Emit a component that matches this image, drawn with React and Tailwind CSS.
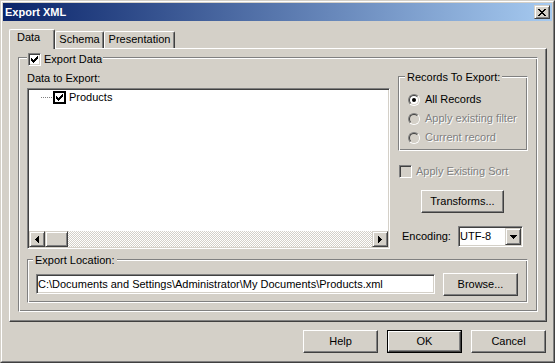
const FONT = "font-['Liberation_Sans',Arial,sans-serif] text-[11px] leading-[13px] text-black";

const raisedBtn =
  "border border-t-white border-l-white border-r-[#404040] border-b-[#404040] shadow-[inset_-1px_-1px_#808080] bg-[#d4d0c8]";
const raisedBox =
  "border border-t-[#d4d0c8] border-l-[#d4d0c8] border-r-[#404040] border-b-[#404040] shadow-[inset_1px_1px_#fff,inset_-1px_-1px_#808080] bg-[#d4d0c8]";
const sunken =
  "border border-t-[#808080] border-l-[#808080] border-r-white border-b-white shadow-[inset_1px_1px_#404040,inset_-1px_-1px_#d4d0c8] p-px";
const etched =
  "border border-t-[#808080] border-l-[#808080] border-r-white border-b-white shadow-[inset_1px_1px_#fff,inset_-1px_-1px_#808080]";
const disabledText = "text-[#808080] [text-shadow:1px_1px_0_#fff]";

const CHECK = "M6 0h1v1h-1zM5 1h2v1h-2zM0 2h1v1h-1zM4 2h3v1h-3zM0 3h2v1h-2zM3 3h3v1h-3zM0 4h5v1h-5zM1 5h3v1h-3zM2 6h1v1h-1z";

function Glyph({ d, w, h }) {
  return (
    <svg width={w} height={h} viewBox={`0 0 ${w} ${h}`} shapeRendering="crispEdges" className="block">
      <path d={d} fill="#000" />
    </svg>
  );
}

function Check({ checked = true, disabled }) {
  return (
    <span className={`${sunken} flex h-[13px] w-[13px] shrink-0 items-center justify-center ${disabled ? "bg-[#d4d0c8]" : "bg-white"}`}>
      {checked && <Glyph d={CHECK} w={7} h={7} />}
    </span>
  );
}

function Radio({ on, disabled }) {
  return (
    <span className="block h-[12px] w-[12px] shrink-0 rounded-full border border-t-[#808080] border-l-[#808080] border-r-white border-b-white">
      <span
        className={`flex h-full w-full items-center justify-center rounded-full border border-t-[#404040] border-l-[#404040] border-r-[#d4d0c8] border-b-[#d4d0c8] ${disabled ? "bg-[#d4d0c8]" : "bg-white"}`}
      >
        {on && <span className="block h-[4px] w-[4px] rounded-full bg-black" />}
      </span>
    </span>
  );
}

function Button({ children, w = "w-[75px]", isDefault }) {
  if (isDefault) {
    return (
      <div className={`${w} h-[23px] border border-black`}>
        <div className={`${raisedBtn} flex h-full w-full items-center justify-center`}>{children}</div>
      </div>
    );
  }
  return <div className={`${raisedBtn} ${w} flex h-[23px] items-center justify-center`}>{children}</div>;
}

function Tab({ label, selected, w }) {
  return (
    <div
      className={`${w} flex justify-center rounded-t-[2px] border-t border-l border-r border-t-white border-l-white border-r-[#404040] shadow-[inset_-1px_0_#808080] pt-px ${
        selected ? "relative z-10 -mb-px h-[20px] justify-start bg-[#d4d0c8] pl-[7px]" : "h-[17px]"
      }`}
    >
      {label}
    </div>
  );
}

export default function App() {
  return (
    <div className={`${FONT} h-[363px] w-[555px] border border-t-[#d4d0c8] border-l-[#d4d0c8] border-r-[#404040] border-b-[#404040] bg-[#d4d0c8]`}>
      <div className="flex h-full flex-col border border-t-white border-l-white border-r-[#808080] border-b-[#808080] p-px">
        {/* title bar */}
        <div className="flex h-[18px] items-center justify-between bg-[linear-gradient(to_right,#0a246a,#a6caf0)] pl-[2px] pr-[2px]">
          <span className="font-bold text-white">Export XML</span>
          <div className={`${raisedBox} flex h-[14px] w-[16px] items-center justify-center`}>
            <Glyph
              w={8}
              h={7}
              d="M0 0h2v1h-2zM6 0h2v1h-2zM1 1h2v1h-2zM5 1h2v1h-2zM2 2h4v1h-4zM3 3h2v1h-2zM2 4h4v1h-4zM1 5h2v1h-2zM5 5h2v1h-2zM0 6h2v1h-2zM6 6h2v1h-2z"
            />
          </div>
        </div>

        <div className="pl-[6px] pt-[8px]">
          {/* tabs */}
          <div className="flex h-[19px] items-end">
            <Tab label="Data" selected w="w-[46px]" />
            <Tab label="Schema" w="w-[49px]" />
            <Tab label="Presentation" w="w-[71px]" />
          </div>

          {/* tab panel */}
          <div className="h-[274px] w-[538px] border border-t-white border-l-white border-r-[#404040] border-b-[#404040] shadow-[inset_-1px_-1px_#808080]">
            <div className={`${etched} relative ml-[8px] mt-[8px] h-[255px] w-[520px] pl-[8px] pt-[14px]`}>
              <div className="absolute left-[8px] top-[-6px] flex h-[14px] items-center gap-[3px] bg-[#d4d0c8] px-px">
                <Check />
                <span>Export Data</span>
              </div>

              <div className="flex items-start">
                {/* left column */}
                <div className="w-[363px]">
                  <div>Data to Export:</div>
                  <div className={`${sunken} mt-[3px] flex h-[161px] flex-col bg-white`}>
                    <div className="flex-1">
                      <div className="mt-px flex h-[13px] items-center pl-[12px]">
                        <svg width="11" height="1" className="block" shapeRendering="crispEdges">
                          <line x1="0" y1="0.5" x2="11" y2="0.5" stroke="#808080" strokeDasharray="1 1" />
                        </svg>
                        <span className="ml-px flex h-[13px] w-[13px] items-center justify-center border-2 border-black bg-white">
                          <Glyph d={CHECK} w={7} h={7} />
                        </span>
                        <span className="ml-[3px]">Products</span>
                      </div>
                    </div>
                    <div className="flex h-[16px]">
                      <div className={`${raisedBox} flex h-[16px] w-[16px] items-center justify-center`}>
                        <Glyph w={4} h={7} d="M3 0h1v7h-1zM2 1h1v5h-1zM1 2h1v3h-1zM0 3h1v1h-1z" />
                      </div>
                      <div className={`${raisedBox} h-[16px] w-[23px]`} />
                      <div className="h-[16px] flex-1 bg-[conic-gradient(#fff_25%,#d4d0c8_0_50%,#fff_0_75%,#d4d0c8_0)] bg-[length:2px_2px]" />
                      <div className={`${raisedBox} flex h-[16px] w-[16px] items-center justify-center`}>
                        <Glyph w={4} h={7} d="M0 0h1v7h-1zM1 1h1v5h-1zM2 2h1v3h-1zM3 3h1v1h-1z" />
                      </div>
                    </div>
                  </div>
                </div>

                {/* right column */}
                <div className="ml-[8px] mt-[4px] w-[130px]">
                  <div className={`${etched} relative h-[75px] w-[130px] pl-[9px] pt-[16px]`}>
                    <div className="absolute left-[6px] top-[-6px] bg-[#d4d0c8] px-[2px]">Records To Export:</div>
                    <div className="flex flex-col gap-[6px]">
                      <div className="flex h-[13px] items-center gap-[5px]">
                        <Radio on />
                        <span>All Records</span>
                      </div>
                      <div className="flex h-[13px] items-center gap-[5px]">
                        <Radio disabled />
                        <span className={disabledText}>Apply existing filter</span>
                      </div>
                      <div className="flex h-[13px] items-center gap-[5px]">
                        <Radio disabled />
                        <span className={disabledText}>Current record</span>
                      </div>
                    </div>
                  </div>

                  <div className="ml-px mt-[14px] flex h-[13px] items-center gap-[4px]">
                    <Check checked={false} disabled />
                    <span className={disabledText}>Apply Existing Sort</span>
                  </div>

                  <div className="ml-[23px] mt-[12px]">
                    <Button w="w-[83px]">Transforms...</Button>
                  </div>

                  <div className="mt-[13px] flex items-center">
                    <span className="ml-[4px] w-[56px]">Encoding:</span>
                    <div className={`${sunken} flex h-[21px] w-[65px] items-center bg-white`}>
                      <span className="flex-1">UTF-8</span>
                      <div className={`${raisedBox} flex h-[17px] w-[16px] items-center justify-center`}>
                        <Glyph w={7} h={4} d="M0 0h7v1h-7zM1 1h5v1h-5zM2 2h3v1h-3zM3 3h1v1h-1z" />
                      </div>
                    </div>
                  </div>
                </div>
              </div>

              {/* export location */}
              <div className={`${etched} relative mt-[10px] h-[44px] w-[501px] pl-[8px] pt-[13px]`}>
                <div className="absolute left-[5px] top-[-6px] bg-[#d4d0c8] px-[2px]">Export Location:</div>
                <div className="flex items-start">
                  <div className={`${sunken} mt-px flex h-[20px] w-[399px] items-center bg-white pl-px`}>
                    C:\Documents and Settings\Administrator\My Documents\Products.xml
                  </div>
                  <div className="ml-[8px]">
                    <Button>Browse...</Button>
                  </div>
                </div>
              </div>
            </div>
          </div>

          {/* dialog buttons */}
          <div className="mt-[8px] flex justify-end gap-[9px] pr-[6px]">
            <Button>Help</Button>
            <Button isDefault>OK</Button>
            <Button>Cancel</Button>
          </div>
        </div>
      </div>
    </div>
  );
}
